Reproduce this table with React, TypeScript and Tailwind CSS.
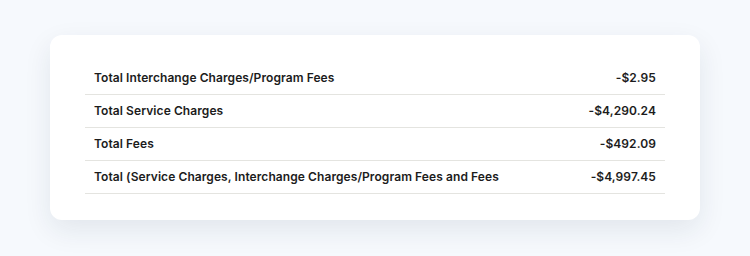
import React from 'react';

const rows = [
  { label: 'Total Interchange Charges/Program Fees', value: '-$2.95' },
  { label: 'Total Service Charges', value: '-$4,290.24' },
  { label: 'Total Fees', value: '-$492.09' },
  { label: 'Total (Service Charges, Interchange Charges/Program Fees and Fees', value: '-$4,997.45' },
];

const App: React.FC = () => {
  return (
    <div className="w-[750px] h-[256px] bg-[#f6f9fd] pt-[35px]" style={{ fontFamily: 'Inter, "Noto Sans", sans-serif' }}>
      <div className="mx-auto w-[650px] bg-white rounded-xl shadow-[0_10px_28px_rgba(20,40,70,0.09)] px-[35px] pt-[27px] pb-[26px]">
        {rows.map(r => (
          <div key={r.label} className="flex items-center justify-between h-[33px] px-[9px] border-b border-[#e4e4e0] text-[12px] tracking-[0.08px] font-semibold text-[#1c1c1c]">
            <span>{r.label}</span>
            <span>{r.value}</span>
          </div>
        ))}
      </div>
    </div>
  );
};

export default App;
